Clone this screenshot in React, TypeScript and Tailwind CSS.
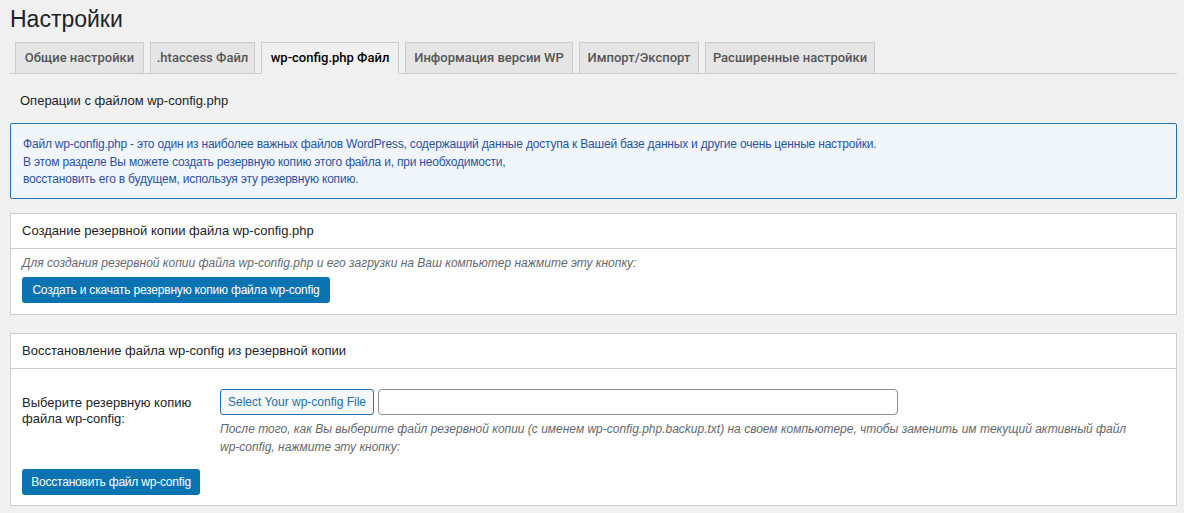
import { useState } from 'react';

// widths taken from the screenshot so the tab row lines up
const tabs = [
    { label: 'Общие настройки', width: 'w-[129px]' },
    { label: '.htaccess Файл', width: 'w-[105px]' },
    { label: 'wp-config.php Файл', width: 'w-[138px]' },
    { label: 'Информация версии WP', width: 'w-[168px]' },
    { label: 'Импорт/Экспорт', width: 'w-[120px]' },
    { label: 'Расширенные настройки', width: 'w-[170px]' },
];

export default function App() {
    const [active, setActive] = useState(2);

    return (
        <div className="min-h-screen bg-[#f0f0f1] pl-[10px] pr-[7px] text-[13px] text-[#1d2327] font-['Liberation_Sans',Arial,sans-serif]">
            {/* Page title */}
            <h1 className="pt-[4px] text-[23px] leading-[30px] font-normal text-[#1d2327]">Настройки</h1>

            {/* Tabs */}
            <div className="mt-[8px] flex gap-[6px] border-b border-[#ccc] pl-[5px] font-['Roboto',sans-serif]">
                {tabs.map((tab, i) => (
                    <button
                        key={tab.label}
                        type="button"
                        onClick={() => setActive(i)}
                        className={
                            (i === active
                                ? '-mb-px h-[32px] whitespace-nowrap border border-[#ccc] border-b-[#f0f0f1] bg-[#f0f0f1] text-[13px] font-medium text-black '
                                : '-mb-px h-[32px] whitespace-nowrap border border-[#ccc] bg-[#e5e5e5] text-[13px] font-medium text-[#555] ') + tab.width
                        }
                    >
                        {tab.label}
                    </button>
                ))}
            </div>

            <p className="mt-[17px] pl-[10px] leading-[20px]">Операции с файлом wp-config.php</p>

            {/* Info box */}
            <div className="mt-[12px] rounded-[2px] border border-[#2271b1] bg-[#f0f6fc] px-[12px] pt-[12px] pb-[9px] text-[12px] leading-[17.5px] tracking-[-0.2px] text-[#2c52a4]">
                Файл wp-config.php - это один из наиболее важных файлов WordPress, содержащий данные доступа к Вашей базе данных и другие очень ценные настройки.
                <br />В этом разделе Вы можете создать резервную копию этого файла и, при необходимости,
                <br />восстановить его в будущем, используя эту резервную копию.
            </div>

            {/* Backup card */}
            <div className="mt-[14px] border border-[#ccd0d4] bg-white">
                <div className="flex h-[35px] items-center border-b border-[#ccd0d4] px-[11px]">
                    <h3 className="text-[13px] font-normal">Создание резервной копии файла wp-config.php</h3>
                </div>
                <div className="px-[11px] pt-[5px] pb-[11px]">
                    <p className="text-[12px] italic leading-[18px] text-[#646970]">
                        Для создания резервной копии файла wp-config.php и его загрузки на Ваш компьютер нажмите эту кнопку:
                    </p>
                    <button
                        type="button"
                        className="mt-[5px] h-[26px] w-[308px] whitespace-nowrap rounded-[3px] bg-[#0a73b2] text-[12px] tracking-[-0.2px] text-white"
                    >
                        Создать и скачать резервную копию файла wp-config
                    </button>
                </div>
            </div>

            {/* Restore card */}
            <div className="mt-[18px] border border-[#ccd0d4] bg-white">
                <div className="flex h-[35px] items-center border-b border-[#ccd0d4] px-[11px]">
                    <h3 className="text-[13px] font-normal">Восстановление файла wp-config из резервной копии</h3>
                </div>
                <div className="px-[11px] pt-[20px] pb-[10px]">
                    <div className="flex">
                        <div className="w-[198px] shrink-0 pt-[6px] leading-[16px]">
                            Выберите резервную копию
                            <br />файла wp-config:
                        </div>
                        <div className="flex-1">
                            <div className="flex gap-[4px]">
                                <button
                                    type="button"
                                    className="h-[26px] w-[154px] whitespace-nowrap rounded-[3px] border border-[#2271b1] bg-[#f6f7f7] text-[12px] text-[#2271b1]"
                                >
                                    Select Your wp-config File
                                </button>
                                <input type="text" className="h-[26px] w-[520px] rounded-[4px] border border-[#8c8f94] bg-white px-2" />
                            </div>
                            <p className="mt-[5px] text-[12px] italic leading-[18px] text-[#646970]">
                                <span className="block whitespace-nowrap">
                                    После того, как Вы выберите файл резервной копии (с именем wp-config.php.backup.txt) на своем компьютере, чтобы заменить им текущий активный файл
                                </span>
                                <span className="block whitespace-nowrap">wp-config, нажмите эту кнопку:</span>
                            </p>
                        </div>
                    </div>
                    <button
                        type="button"
                        className="mt-[13px] h-[26px] w-[178px] whitespace-nowrap rounded-[3px] bg-[#0a73b2] text-[12px] tracking-[-0.2px] text-white"
                    >
                        Восстановить файл wp-config
                    </button>
                </div>
            </div>
        </div>
    );
}
